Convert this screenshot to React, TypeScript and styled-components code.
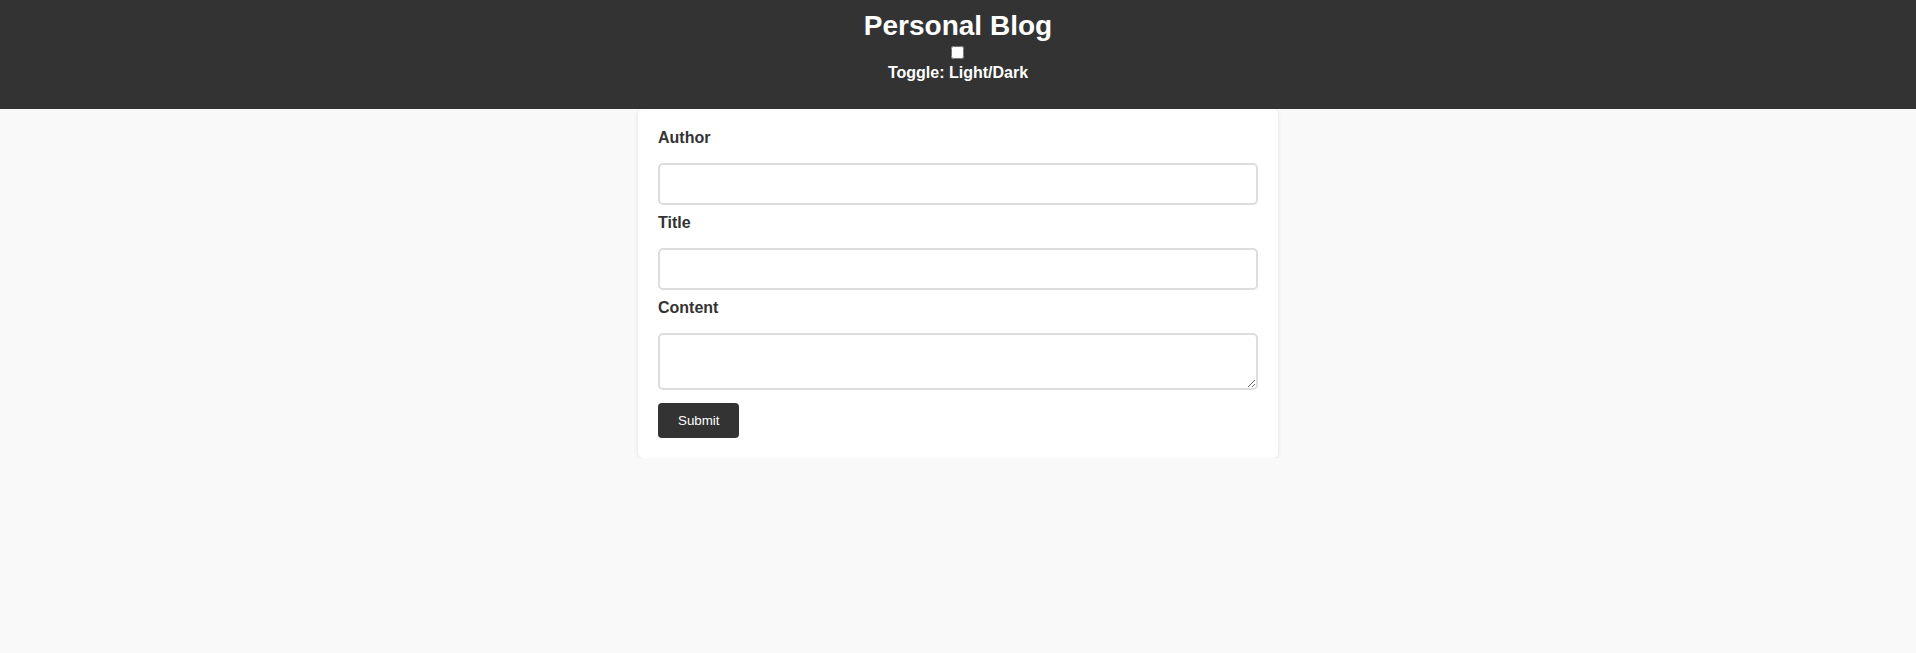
import React, { useState } from "react";

import styled, { createGlobalStyle } from "styled-components";

const GlobalStyle = createGlobalStyle`
  html, body {
    margin: 0;
    padding: 0;
    background-color: #f9f9f9;
    font-family: "Liberation Sans", Arial, sans-serif;
    color: #333;
  }
  * {
    box-sizing: border-box;
  }
`;

const Header = styled.header`
  background-color: #333;
  color: #fff;
  height: 109px;
  padding-top: 10px;
  display: flex;
  flex-direction: column;
  align-items: center;
`;

const Heading = styled.h1`
  margin: 0;
  font-size: 28px;
  line-height: 32px;
  font-weight: bold;
`;

const ToggleLabel = styled.label`
  display: flex;
  flex-direction: column;
  align-items: center;
  font-size: 16px;
  font-weight: bold;
  line-height: 18px;
  cursor: pointer;

  input {
    width: 13px;
    height: 13px;
    margin: 4px 0 5px;
  }
`;

const FormCard = styled.form`
  width: 640px;
  margin: 0 auto;
  padding: 20px;
  background-color: #fff;
  border-radius: 5px;
  box-shadow: 0 1px 4px rgba(0, 0, 0, 0.1);
  display: flex;
  flex-direction: column;
  align-items: flex-start;
`;

const FieldLabel = styled.label`
  font-size: 16px;
  font-weight: bold;
  line-height: 18px;
  color: #333;
  margin-bottom: 16px;
`;

const TextInput = styled.input`
  width: 100%;
  height: 42px;
  padding: 10px;
  border: 2px solid #ddd;
  border-radius: 5px;
  font-size: 16px;
  font-family: inherit;
  margin: 0 0 9px;
  outline: none;
`;

const TextArea = styled.textarea`
  width: 100%;
  height: 57px;
  padding: 10px;
  border: 2px solid #ddd;
  border-radius: 5px;
  font-size: 16px;
  font-family: inherit;
  margin: 0 0 13px;
  display: block;
  outline: none;
`;

const SubmitButton = styled.button`
  background-color: #333;
  color: #fff;
  border: none;
  border-radius: 4px;
  padding: 10px 20px;
  font-size: 13.33px;
  line-height: 15px;
  font-family: "Liberation Sans", Arial, sans-serif;
  cursor: pointer;
`;

const App = () => {
  const [dark, setDark] = useState(false);
  const [author, setAuthor] = useState("");
  const [title, setTitle] = useState("");
  const [content, setContent] = useState("");

  return (
    <>
      <GlobalStyle />
      <Header>
        <Heading>Personal Blog</Heading>
        <ToggleLabel>
          <input
            type="checkbox"
            checked={dark}
            onChange={() => setDark(!dark)}
          />
          Toggle: Light/Dark
        </ToggleLabel>
      </Header>
      <FormCard onSubmit={(e) => e.preventDefault()}>
        <FieldLabel htmlFor="author">Author</FieldLabel>
        <TextInput
          id="author"
          value={author}
          onChange={(e) => setAuthor(e.target.value)}
        />
        <FieldLabel htmlFor="title">Title</FieldLabel>
        <TextInput
          id="title"
          value={title}
          onChange={(e) => setTitle(e.target.value)}
        />
        <FieldLabel htmlFor="content">Content</FieldLabel>
        <TextArea
          id="content"
          value={content}
          onChange={(e) => setContent(e.target.value)}
        />
        <SubmitButton type="submit">Submit</SubmitButton>
      </FormCard>
    </>
  );
};

export default App;
